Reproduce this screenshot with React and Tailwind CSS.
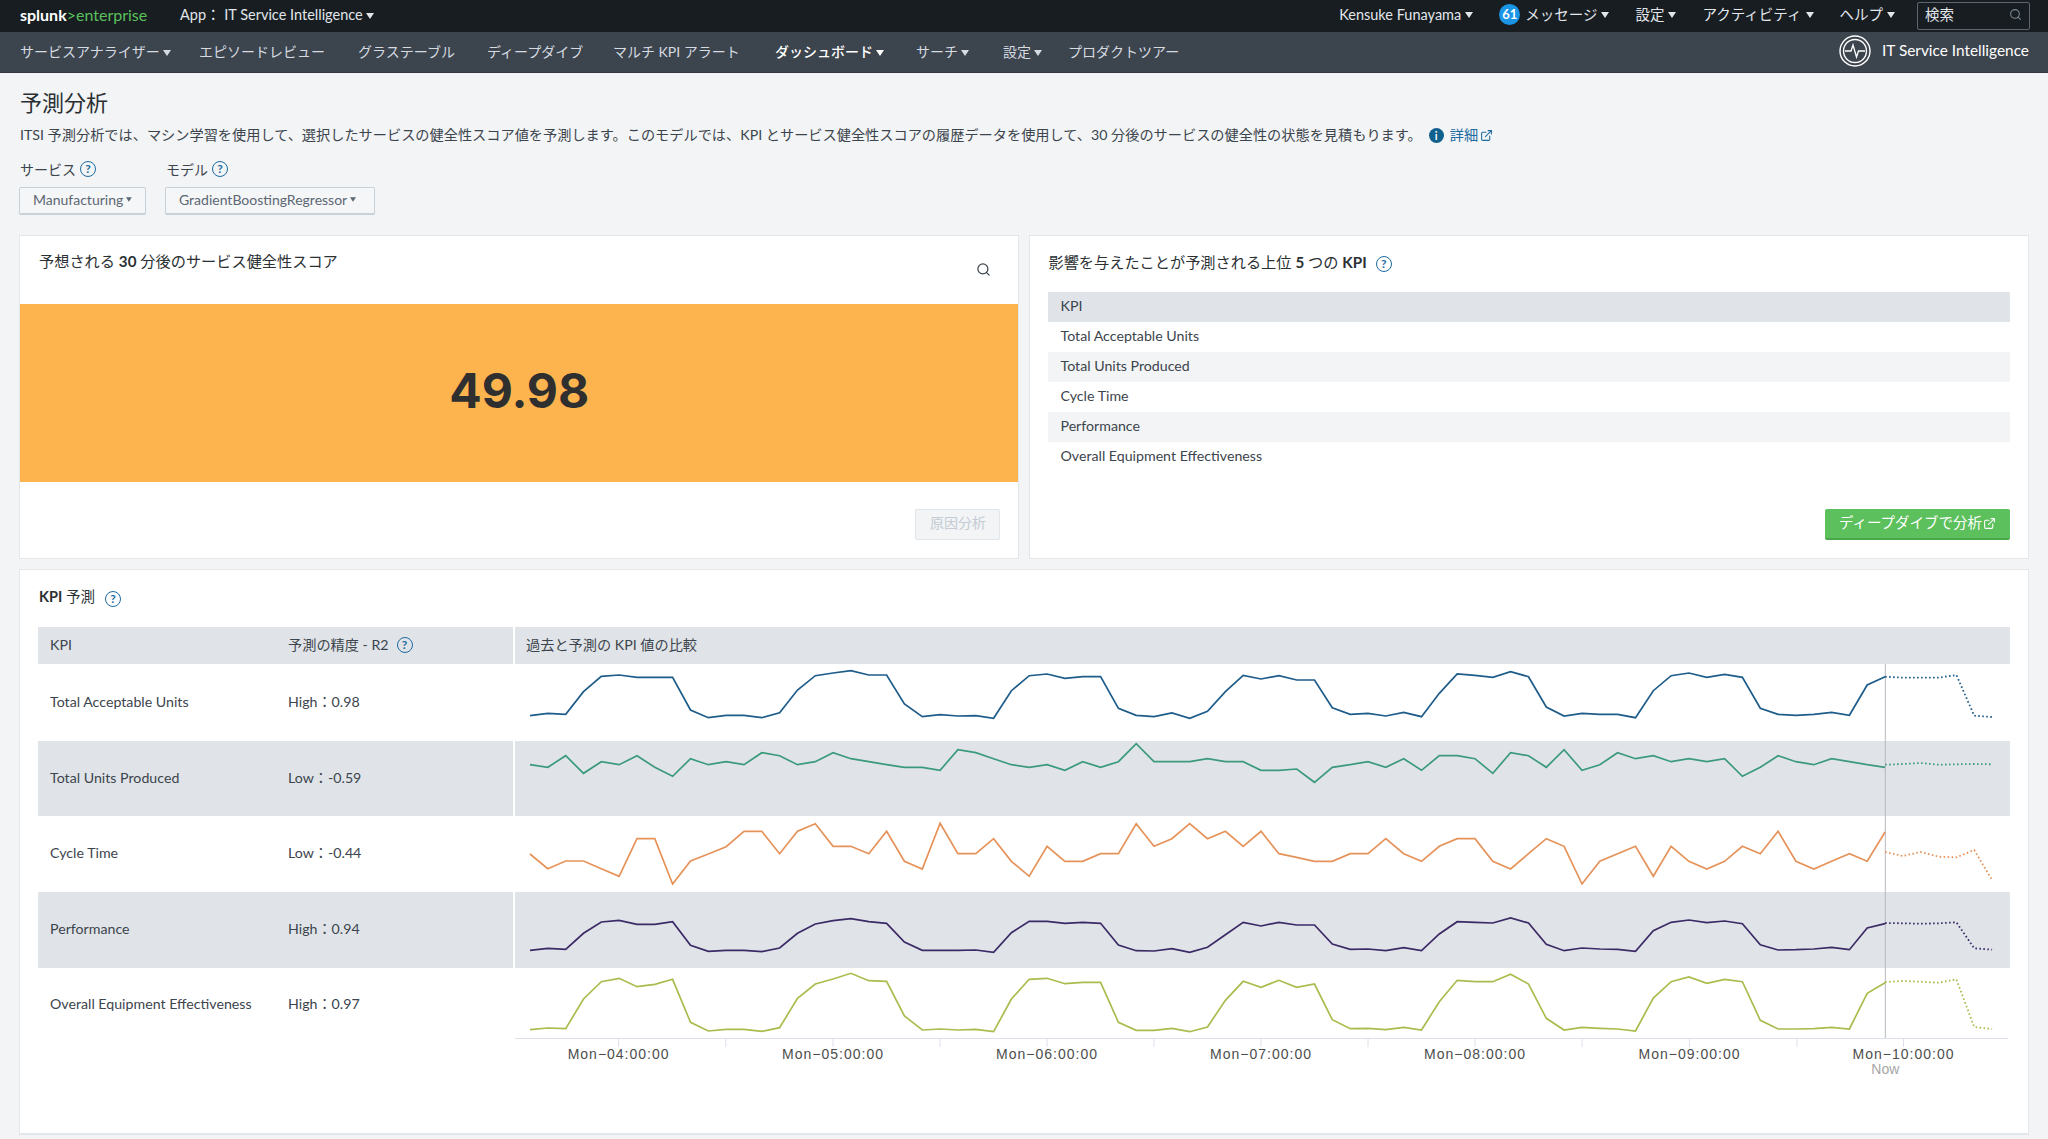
import { ExternalLink, Search } from "lucide-react";

const Caret = ({ className = "w-[8px] h-[6px] ml-[3px]" }) => (
	<svg viewBox="0 0 8 6" className={`inline-block align-middle fill-current ${className}`}>
		<path d="M0 0h8L4 6z" />
	</svg>
);

const Help = ({ className = "" }) => (
	<span className={`inline-flex items-center justify-center w-[16px] h-[16px] rounded-full border-[1.5px] border-[#1e6ba1] text-[#1e6ba1] text-[12px] leading-none font-bold ${className}`}>?</span>
);

const topItems = [
	["Kensuke Funayama", "ml-0"],
	["メッセージ", "ml-[26px]"],
	["設定", "ml-[26px]"],
	["アクティビティ", "ml-[26px]"],
	["ヘルプ", "ml-[26px]"],
];

const navItems = [
	["サービスアナライザー", true, "w-[179px]"],
	["エピソードレビュー", false, "w-[159px]"],
	["グラステーブル", false, "w-[129px]"],
	["ディープダイブ", false, "w-[126px]"],
	["マルチ KPI アラート", false, "w-[162px]"],
	["ダッシュボード", true, "w-[141px]"],
	["サーチ", true, "w-[87px]"],
	["設定", true, "w-[65px]"],
	["プロダクトツアー", false, "w-auto"],
];

const x = (i) => 530 + 17.83 * i;

const rows = [
	{
		name: "Total Acceptable Units", acc: "High：0.98", top: 664, h: "h-[77px]", pad: "pb-[2px]", height: 77, base: 650, color: "#1e5c8a", gray: false,
		data: [197,190,193,125,79,75,82,82,82,180,203,196,196,203,188,120,77,69,62,75,75,162,200,194,198,197,205,122,77,72,85,80,80,175,196,200,189,205,184,125,76,87,77,90,90,173,193,190,198,187,200,130,72,76,82,65,80,171,198,190,193,193,203,122,77,69,82,73,82,175,193,196,193,187,196,105,80],
		forecast: [80,83,83,83,75,197,201],
	},
	{
		name: "Total Units Produced", acc: "Low：-0.59", top: 741, h: "h-[75px]", pad: "pb-[2px]", height: 75, base: 650, color: "#3c9a7c", gray: true,
		data: [344,352,317,370,335,344,317,352,379,326,344,335,344,308,317,344,335,308,326,335,344,352,352,361,299,308,326,344,352,344,361,335,352,335,281,335,335,335,326,335,335,361,361,357,397,352,344,335,352,326,361,317,317,326,370,308,317,352,299,361,344,308,326,317,335,326,335,326,379,352,317,335,344,326,335,344,352],
		forecast: [344,342,339,344,343,342,343],
	},
	{
		name: "Cycle Time", acc: "Low：-0.44", top: 816, h: "h-[76px]", pad: "pb-[2px]", height: 76, base: 650, color: "#e5935a", gray: false,
		data: [612,656,633,633,656,679,566,566,702,633,612,590,544,544,611,544,521,589,589,611,544,634,657,520,611,611,566,634,679,589,634,634,611,611,521,589,566,521,566,544,589,544,611,622,634,634,611,611,566,611,634,589,566,566,634,657,611,566,589,702,634,611,589,679,589,634,657,634,589,611,544,634,657,634,611,634,546],
		forecast: [606,618,606,620,622,600,690],
	},
	{
		name: "Performance", acc: "High：0.94", top: 892, h: "h-[76px]", pad: "pb-[2px]", height: 76, base: 650, color: "#3b2a66", gray: true,
		data: [901,895,898,850,816,811,823,823,815,886,904,901,901,905,894,850,822,812,806,815,820,876,901,901,901,900,907,848,814,814,820,817,820,885,902,903,896,907,892,854,817,828,817,825,825,882,898,897,902,893,902,852,815,817,819,804,819,883,902,894,897,898,904,842,817,810,818,813,821,884,900,899,897,892,899,834,821],
		forecast: [819,820,821,820,817,895,899],
	},
	{
		name: "Overall Equipment Effectiveness", acc: "High：0.97", top: 968, h: "h-[70px]", pad: "pt-[2px]", height: 70, base: 930, color: "#a8bd4d", gray: false,
		data: [299,294,296,207,155,145,170,163,148,277,303,298,298,304,293,205,162,147,130,152,154,258,300,297,300,298,305,207,148,145,161,157,157,277,301,301,295,305,291,211,154,172,151,172,162,269,296,295,299,292,300,215,151,155,155,133,162,265,300,292,295,297,303,204,155,141,160,148,155,271,297,297,296,292,297,190,158],
		forecast: [156,153,155,158,148,291,297],
	},
];

const toPoints = (row, values, start) =>
	values.map((v, i) => `${(x(start + i) - 515).toFixed(1)},${(row.base + v / 3 - row.top).toFixed(1)}`).join(" ");

const Spark = ({ row }) => (
	<svg width="1495" height={row.height} viewBox={`0 0 1495 ${row.height}`} className="block">
		<line x1="1370.3" x2="1370.3" y1="0" y2={row.height} stroke="#b4b9be" strokeWidth="1" />
		<polyline points={toPoints(row, row.data, 0)} fill="none" stroke={row.color} strokeWidth="1.7" />
		<polyline points={toPoints(row, row.forecast, 76)} fill="none" stroke={row.color} strokeWidth="1.8" strokeDasharray="1.6 2.4" />
	</svg>
);

const majorTicks = [
	[618.6, "04"], [833, "05"], [1047, "06"], [1261, "07"], [1475, "08"], [1689.5, "09"], [1903.5, "10"],
];
const minorTicks = [725.8, 940, 1154, 1368, 1582, 1797];

const Axis = () => (
	<svg width="1495" height="50" viewBox="0 0 1495 50" className="block">
		<line x1="0" x2="1493" y1="0.5" y2="0.5" stroke="#dce0ea" />
		{minorTicks.map((t) => (
			<line key={t} x1={t - 515} x2={t - 515} y1="0" y2="9" stroke="#dce0ea" />
		))}
		{majorTicks.map(([t, h]) => (
			<g key={h}>
				<line x1={t - 515} x2={t - 515} y1="0" y2="9" stroke="#dce0ea" />
				<text x={t - 515} y="21" textAnchor="middle" fontSize="14" fontFamily="'Liberation Sans', sans-serif" fill="#4d4d4d" letterSpacing="1">{`Mon\u2212${h}:00:00`}</text>
			</g>
		))}
		<text x="1370.3" y="36" textAnchor="middle" fontSize="14" fontFamily="'Liberation Sans', sans-serif" fill="#a6a6a6">Now</text>
	</svg>
);

const Dropdown = ({ label, className }) => (
	<div className={`flex items-center h-[28px] px-[13px] pb-[2px] bg-[#f5f6f7] border border-[#c8d0d8] rounded-[2px] border-b-2 text-[14px] text-[#5c6773] whitespace-nowrap ${className}`}>
		{label}
		<Caret className="w-[6px] h-[5px] ml-[3px]" />
	</div>
);

const App = () => {
	return (
		<div className="min-h-screen w-[2048px] bg-[#f2f4f5] text-[#3c444d] text-[14.2px] [font-family:Lato,'Noto_Sans_CJK_JP',sans-serif]">
			{/* top bar */}
			<div className="flex items-center h-[32px] pl-5 pr-[18px] pb-[3px] bg-[#171d21] text-[#e1e6eb] text-[14.5px]">
				<div className="text-[16px] leading-none font-bold text-white w-[160px]">splunk<span className="text-[#5cc05c] font-normal">&gt;enterprise</span></div>
				<div>App： IT Service Intelligence<Caret /></div>
				<div className="flex items-center ml-auto">
					{topItems.map(([label, ml]) => (
						<div key={label} className={`flex items-center whitespace-nowrap ${ml}`}>
							{label === "メッセージ" && (
								<span className="flex items-center justify-center w-[21px] h-[21px] mr-[5px] rounded-full bg-[#1a95e6] text-white text-[13px] font-bold">61</span>
							)}
							{label}
							<Caret className="w-[8px] h-[6px] ml-[4px]" />
						</div>
					))}
					<div className="flex items-center justify-between w-[113px] h-[28px] ml-[22px] mt-[3px] px-[7px] pb-[3px] border border-[#5c6773] rounded-[2px] bg-[#171d21]">
						<span>検索</span>
						<Search size={13} className="text-[#7c8894]" />
					</div>
				</div>
			</div>

			{/* app nav */}
			<div className="flex items-center h-[41px] pl-5 pr-[19px] pb-[2px] bg-[#3c444d] text-[#d5dbe1] text-[14px] border-b border-[#30373e]">
				{navItems.map(([label, caret, w]) => (
					<div key={label} className={`whitespace-nowrap ${w} ${label === "ダッシュボード" ? "text-white font-medium" : ""}`}>
						{label}
						{caret && <Caret />}
					</div>
				))}
				<div className="flex items-center ml-auto text-white text-[15.4px]">
					<svg viewBox="0 0 32 32" className="w-[32px] h-[32px] mr-[11px]" fill="none" stroke="#fff">
						<circle cx="16" cy="16" r="15" strokeWidth="1.4" />
						<circle cx="16" cy="16" r="11.5" strokeWidth="1.4" />
						<path d="M6 16h6l2-6 3.5 12 2-6h6.5" strokeWidth="1.3" />
					</svg>
					IT Service Intelligence
				</div>
			</div>

			{/* page head */}
			<div className="pl-5 pr-[19px]">
				<h1 className="pt-[15px] text-[22px] leading-[30px] text-[#2b3033]">予測分析</h1>
				<div className="flex items-center mt-[7px] h-[20px] whitespace-nowrap">
					<span>ITSI 予測分析では、マシン学習を使用して、選択したサービスの健全性スコア値を予測します。このモデルでは、KPI とサービス健全性スコアの履歴データを使用して、30 分後のサービスの健全性の状態を見積もります。</span>
					<span className="flex items-center justify-center w-[15px] h-[15px] ml-[7px] rounded-full bg-[#11618f] text-white text-[11px] font-bold leading-none">i</span>
					<span className="flex items-center ml-[6px] text-[#1e6ba1]">詳細<ExternalLink size={13} className="ml-[2px]" /></span>
				</div>
				<div className="flex mt-[14px] text-[14px] h-[20px] items-center">
					<div className="flex items-center w-[146px]">サービス<Help className="ml-[4px]" /></div>
					<div className="flex items-center">モデル<Help className="ml-[4px]" /></div>
				</div>
				<div className="flex mt-[8px]">
					<Dropdown label="Manufacturing" className="w-[127px] -ml-[1px]" />
					<Dropdown label="GradientBoostingRegressor" className="w-[210px] ml-[19px]" />
				</div>

				{/* top panels */}
				<div className="flex gap-[10px] mt-[20px] -ml-[1px]">
					<div className="flex flex-col w-[1001px] h-[324px] bg-white border border-[#e4e7ea]">
						<div className="relative h-[68px] pl-[19px] pt-[15px] text-[15.2px] leading-[20px] text-[#2b3033]">
							予想される <span className="font-bold">30</span> 分後のサービス健全性スコア
							<Search size={15} strokeWidth={2} className="absolute right-[27px] top-[26px] text-[#3c444d]" />
						</div>
						<div className="flex items-center justify-center h-[178px] pb-[5px] bg-[#fdb44f] text-[#2f2f2f] text-[48px] font-bold [font-family:Inter,sans-serif]">49.98</div>
						<div className="flex justify-end mt-[27px] mr-[18px]">
							<div className="flex items-start justify-center w-[85px] h-[31px] pt-[2px] bg-[#f2f4f5] border border-[#e1e6eb] rounded-[2px] text-[14px] text-[#c3cbd4]">原因分析</div>
						</div>
					</div>
					<div className="flex flex-col w-[1000px] h-[324px] bg-white border border-[#e4e7ea] px-[18px]">
						<div className="flex items-center h-[56px] pb-[3px] text-[15.2px] text-[#2b3033]">
							影響を与えたことが予測される上位&nbsp;<span className="font-bold">5</span>&nbsp;つの&nbsp;<span className="font-bold">KPI</span><Help className="ml-[9px] mt-[2px]" />
						</div>
						<div className="h-[30px] pl-3 pb-[2px] flex items-center bg-[#e0e4e8]">KPI</div>
						{["Total Acceptable Units", "Total Units Produced", "Cycle Time", "Performance", "Overall Equipment Effectiveness"].map((k, i) => (
							<div key={k} className={`h-[30px] pl-3 pb-[2px] flex items-center ${i % 2 ? "bg-[#f2f4f5]" : ""}`}>{k}</div>
						))}
						<div className="flex justify-end mt-[37px]">
							<div className="flex items-start justify-center w-[185px] h-[31px] pt-[3px] bg-[#5cc05c] border-b-2 border-[#4aa84a] rounded-[2px] text-white text-[14.5px]">
								ディープダイブで分析<ExternalLink size={13} className="ml-[1px] mt-[5px]" />
							</div>
						</div>
					</div>
				</div>

				{/* kpi forecast */}
				<div className="mt-[10px] -ml-[1px] h-[566px] bg-white border border-[#e4e7ea] border-b-2">
					<div className="flex items-center h-[57px] pl-[19px] text-[14.5px] text-[#2b3033]">
						<span className="-mt-[4px]"><span className="font-bold">KPI</span> 予測</span><Help className="ml-[10px]" />
					</div>
					<div className="ml-[18px]">
						<div className="flex h-[37px]">
							<div className="flex items-center w-[475px] pb-[2px] bg-[#e0e4e8]">
								<div className="w-[250px] pl-3">KPI</div>
								<div className="flex items-center">予測の精度 - R2<Help className="ml-[8px] mt-[2px]" /></div>
							</div>
							<div className="flex items-center w-[1495px] ml-[2px] pl-[11px] pb-[2px] bg-[#e0e4e8]">過去と予測の KPI 値の比較</div>
						</div>
						{rows.map((row) => (
							<div key={row.name} className={`flex ${row.h}`}>
								<div className={`flex items-center w-[475px] ${row.pad} ${row.gray ? "bg-[#e0e4e8]" : ""}`}>
									<div className="w-[250px] pl-3">{row.name}</div>
									<div>{row.acc}</div>
								</div>
								<div className={`w-[1495px] ml-[2px] ${row.gray ? "bg-[#e0e4e8]" : ""}`}>
									<Spark row={row} />
								</div>
							</div>
						))}
						<div className="ml-[477px]">
							<Axis />
						</div>
					</div>
				</div>
			</div>
		</div>
	);
};

export default App;
